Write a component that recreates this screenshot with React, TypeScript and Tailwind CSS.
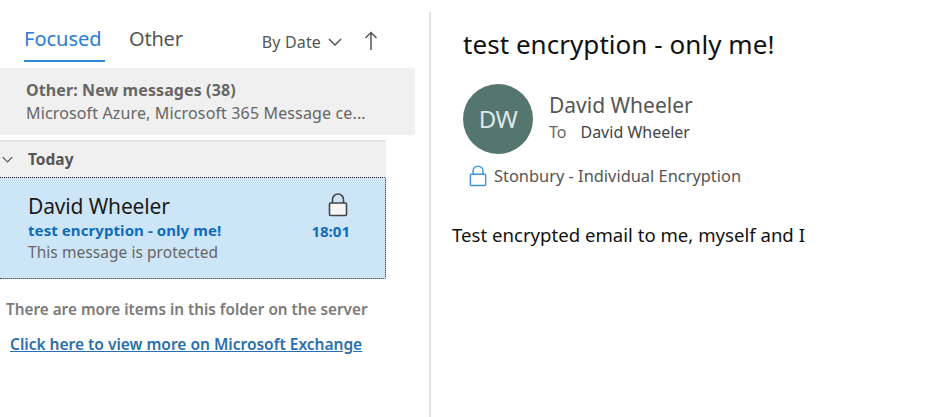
const font = { fontFamily: '"Noto Sans", "Open Sans", sans-serif' };

function Lock({ className }: { className: string }) {
  return (
    <svg viewBox="0 0 20 24" fill="none" className={className}>
      <path d="M4.5 10V6.5a5.5 5.5 0 0 1 11 0V10" stroke="currentColor" strokeWidth="1.6" />
      <rect x="1.5" y="10" width="17" height="12.5" rx="1" fill="var(--lock-fill, none)" stroke="currentColor" strokeWidth="1.6" />
    </svg>
  );
}

function Chevron({ className }: { className: string }) {
  return (
    <svg viewBox="0 0 14 8" fill="none" stroke="currentColor" strokeWidth="1.5" className={className}>
      <path d="M1 1l6 6 6-6" />
    </svg>
  );
}

function MessageList() {
  return (
    <div className="w-[429px] shrink-0 flex flex-col">
      {/* Tabs */}
      <div className="h-[68px] flex pr-[51px]">
        <div className="ml-[24px] w-[81px] h-[62px] border-b-2 border-[#2b88d8] pt-[24px] text-[20px] leading-[30px] text-[#2b7cd3]">
          Focused
        </div>
        <div className="ml-[24px] pt-[24px] text-[20px] leading-[30px] tracking-[-0.2px] text-[#555]">Other</div>
        <div className="ml-auto pt-[29px] flex items-center h-[54px] text-[#555]">
          <span className="text-[16px] leading-[24px] tracking-[0.15px]">By Date</span>
          <Chevron className="w-[14px] h-[8px] ml-[7px]" />
          <svg viewBox="0 0 14 20" fill="none" stroke="currentColor" strokeWidth="1.5" className="w-[14px] h-[20px] ml-[22px] mb-[2px]">
            <path d="M7 19V1.5M1.5 7 7 1.5 12.5 7" />
          </svg>
        </div>
      </div>

      {/* Other inbox notice */}
      <div className="w-[415px] h-[67px] bg-[#f0f0f0] rounded-r-[3px] pl-[26px] pt-[11px] text-[#666]">
        <div className="text-[16px] leading-[23px] font-bold tracking-[0.1px]">Other: New messages (38)</div>
        <div className="text-[16px] leading-[23px] tracking-[0.14px]">Microsoft Azure, Microsoft 365 Message ce...</div>
      </div>

      <div className="w-[386px] mt-[5px]">
        <div className="h-[37px] bg-[#f0f0f0] border-t-2 border-[#e4e4e4] flex items-center text-[#555]">
          <Chevron className="w-[11px] h-[7px] ml-[2px]" />
          <span className="ml-[15px] text-[15.5px] font-bold">Today</span>
        </div>

        {/* Selected message */}
        <div className="h-[102px] bg-[#cde6f7] border-[1.5px] border-dotted border-[#222] border-l-0 rounded-r-[2px] pl-[28px] pr-[35px] pt-[14px] flex justify-between">
          <div>
            <div className="text-[21px] leading-[29px] tracking-[-0.15px] text-[#1a1a1a]">David Wheeler</div>
            <div className="text-[15px] leading-[19px] font-bold tracking-[0.08px] text-[#0f6cbd]">test encryption - only me!</div>
            <div className="text-[15.5px] leading-[24px] tracking-[0.05px] text-[#666]">This message is protected</div>
          </div>
          <div className="flex flex-col items-end">
            <Lock className="w-[20px] h-[24px] mr-[2px] mt-[1px] text-[#444] [--lock-fill:#f5f5f5]" />
            <div className="mt-[5px] text-[15px] leading-[19px] font-bold text-[#0f6cbd]">18:01</div>
          </div>
        </div>
      </div>

      <div className="mt-[18px] pl-[6px] text-[15.3px] leading-[24px] font-semibold text-[#7a7a7a]">
        There are more items in this folder on the server
      </div>
      <div className="mt-[11px] pl-[10px] text-[15.5px] leading-[24px] font-semibold text-[#2a6fb0] underline">
        Click here to view more on Microsoft Exchange
      </div>
    </div>
  );
}

function ReadingPane() {
  return (
    <div className="flex-1 border-l-2 border-[#e3e3e3] mt-[12px] pl-[32px]">
      <div className="mt-[13px] text-[26px] leading-[38px] tracking-[0.05px] text-[#111]">test encryption - only me!</div>

      <div className="mt-[21px] flex">
        <div className="w-[70px] h-[70px] rounded-full bg-[#55756f] flex items-center justify-center text-[24px] tracking-[-0.5px] text-[#dfe8e6]">
          DW
        </div>
        <div className="ml-[16px] pt-[6px]">
          <div className="text-[21px] leading-[30px] text-[#555]">David Wheeler</div>
          <div className="flex text-[16px] leading-[24px] text-[#555]">
            <span className="text-[#666]">To</span>
            <span className="ml-[14px] text-[#444]">David Wheeler</span>
          </div>
        </div>
      </div>

      <div className="mt-[10px] ml-[6px] flex items-center">
        <Lock className="w-[18px] h-[24px] text-[#3a96dd]" />
        <span className="ml-[7px] text-[16.4px] leading-[24px] text-[#555]">Stonbury - Individual Encryption</span>
      </div>

      <div className="mt-[35px] -ml-[11px] text-[18.6px] leading-[24px] text-[#111]">
        Test encrypted email to me, myself and I
      </div>
    </div>
  );
}

export default function App() {
  return (
    <div className="w-[940px] h-[417px] bg-white flex overflow-hidden" style={font}>
      <MessageList />
      <ReadingPane />
    </div>
  );
}
